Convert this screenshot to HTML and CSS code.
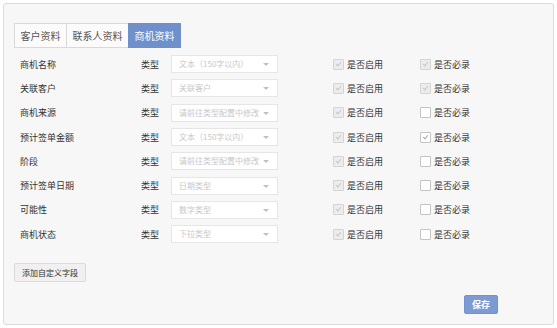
FILE: index.html
```html
<!DOCTYPE html>
<html lang="zh-CN">
<head>
    <meta charset="UTF-8">
    <title>商机资料</title>
    <link rel="stylesheet" href="styles.css">
</head>
<body>

    <div class="panel">
        <!-- Tabs -->
        <div class="tabs">
            <div class="tab">客户资料</div>
            <div class="tab">联系人资料</div>
            <div class="tab active">商机资料</div>
        </div>

        <!-- Field rows -->
        <div class="fields">
            <div class="row">
                <span class="name">商机名称</span>
                <span class="type">类型</span>
                <div class="select">文本（150字以内）<i class="arrow"></i></div>
                <label class="check"><span class="box disabled on"></span>是否启用</label>
                <label class="check"><span class="box disabled on"></span>是否必录</label>
            </div>
            <div class="row">
                <span class="name">关联客户</span>
                <span class="type">类型</span>
                <div class="select">关联客户<i class="arrow"></i></div>
                <label class="check"><span class="box disabled on"></span>是否启用</label>
                <label class="check"><span class="box disabled on"></span>是否必录</label>
            </div>
            <div class="row">
                <span class="name">商机来源</span>
                <span class="type">类型</span>
                <div class="select">请前往类型配置中修改<i class="arrow"></i></div>
                <label class="check"><span class="box disabled on"></span>是否启用</label>
                <label class="check"><span class="box"></span>是否必录</label>
            </div>
            <div class="row">
                <span class="name">预计签单金额</span>
                <span class="type">类型</span>
                <div class="select">文本（150字以内）<i class="arrow"></i></div>
                <label class="check"><span class="box disabled on"></span>是否启用</label>
                <label class="check"><span class="box on"></span>是否必录</label>
            </div>
            <div class="row">
                <span class="name">阶段</span>
                <span class="type">类型</span>
                <div class="select">请前往类型配置中修改<i class="arrow"></i></div>
                <label class="check"><span class="box disabled on"></span>是否启用</label>
                <label class="check"><span class="box"></span>是否必录</label>
            </div>
            <div class="row">
                <span class="name">预计签单日期</span>
                <span class="type">类型</span>
                <div class="select">日期类型<i class="arrow"></i></div>
                <label class="check"><span class="box disabled on"></span>是否启用</label>
                <label class="check"><span class="box"></span>是否必录</label>
            </div>
            <div class="row">
                <span class="name">可能性</span>
                <span class="type">类型</span>
                <div class="select">数字类型<i class="arrow"></i></div>
                <label class="check"><span class="box disabled on"></span>是否启用</label>
                <label class="check"><span class="box"></span>是否必录</label>
            </div>
            <div class="row">
                <span class="name">商机状态</span>
                <span class="type">类型</span>
                <div class="select">下拉类型<i class="arrow"></i></div>
                <label class="check"><span class="box disabled on"></span>是否启用</label>
                <label class="check"><span class="box"></span>是否必录</label>
            </div>
        </div>

        <button class="btn-add">添加自定义字段</button>

        <div class="footer">
            <button class="btn-save">保存</button>
        </div>
    </div>

</body>
</html>
```

FILE: styles.css
```css
body {
    font-family: "Noto Sans CJK SC", "Noto Sans", sans-serif;
    margin: 0;
    padding: 3px;
    background-color: #fff;
    color: #333;
}

/* Panel */
.panel {
    box-sizing: border-box;
    width: 551px;
    height: 322px;
    background-color: #f7f7f7;
    border: 1px solid #dcdcdc;
    border-radius: 3px;
    padding: 19px 10px 0 10px;
}

/* Tabs */
.tabs {
    display: flex;
}

.tab {
    box-sizing: border-box;
    height: 25px;
    line-height: 23px;
    padding: 0 5.5px;
    font-size: 10px;
    color: #555;
    background-color: #fbfbfb;
    border: 1px solid #d9d9d9;
    margin-right: -1px;
}

.tab.active {
    background-color: #7090cc;
    border-color: #7090cc;
    color: #fff;
}

/* Rows */
.fields {
    margin-top: 4px;
    padding-left: 6px;
}

.row {
    display: grid;
    grid-template-columns: 121px 30px 107px 55px 87px 80px;
    align-items: center;
    height: 24.3px;
    font-size: 9px;
}

.row > :nth-child(4) {
    grid-column: 5;
}

.name, .type {
    color: #333;
}

.select {
    box-sizing: border-box;
    position: relative;
    height: 18px;
    line-height: 16px;
    padding-left: 7px;
    font-size: 8px;
    white-space: nowrap;
    background-color: #fff;
    border: 1px solid #e6e6e6;
    color: #c8c8c8;
}

.arrow {
    position: absolute;
    right: 8px;
    top: 7px;
    border-left: 3px solid transparent;
    border-right: 3px solid transparent;
    border-top: 3px solid #c0c0c0;
}

.check {
    display: flex;
    align-items: center;
    color: #333;
}

.box {
    box-sizing: border-box;
    position: relative;
    width: 11px;
    height: 11px;
    margin-right: 3px;
    background-color: #fff;
    border: 1px solid #c4c4c4;
    border-radius: 1px;
}

.box.disabled {
    background-color: #ececec;
    border-color: #d4d4d4;
}

.box.on::after {
    content: "";
    position: absolute;
    left: 3px;
    top: 1px;
    width: 2px;
    height: 4px;
    border-right: 1px solid #aaa;
    border-bottom: 1px solid #aaa;
    transform: rotate(40deg);
}

.box.disabled.on::after {
    border-color: #c6c6c6;
}

/* Buttons */
.btn-add {
    display: block;
    margin-top: 17px;
    height: 19px;
    width: 72px;
    padding: 0;
    font-family: inherit;
    font-size: 8px;
    color: #333;
    background-color: #f0f0f0;
    border: 1px solid #dadada;
    border-radius: 2px;
}

.footer {
    display: flex;
    justify-content: flex-end;
    margin-top: 13px;
    padding-right: 45px;
}

.btn-save {
    height: 19px;
    width: 34px;
    padding: 0;
    font-family: inherit;
    font-size: 9px;
    font-weight: bold;
    color: #fff;
    background-color: #7b9bd2;
    border: 1px solid #7393cc;
    border-radius: 2px;
}
```
